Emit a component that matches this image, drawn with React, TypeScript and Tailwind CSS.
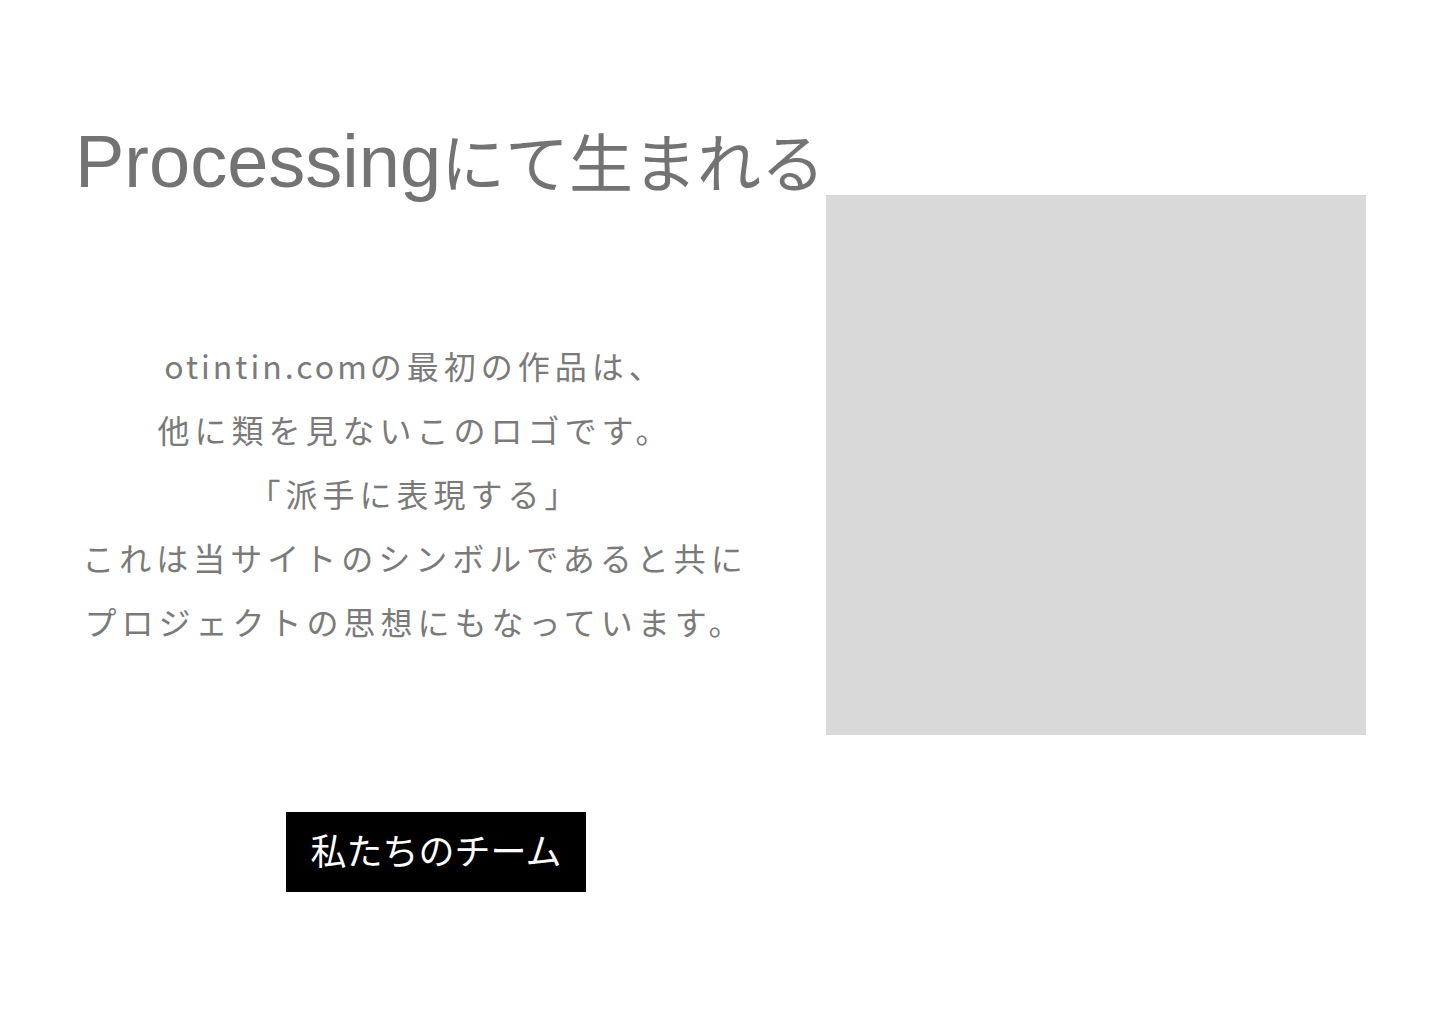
const jp = "font-['Noto_Sans_CJK_JP',sans-serif]";

function Heading() {
  return (
    <h1 className="mt-[123px] h-[76px] whitespace-nowrap text-[74px] leading-[72px] text-[#737373] font-['Liberation_Sans','Noto_Sans_CJK_JP',sans-serif]">
      Processing
      <span className="font-['Noto_Sans_CJK_JP',sans-serif] text-[64px] tracking-[0px]">
        にて生まれる
      </span>
    </h1>
  );
}

const lines = [
  "他に類を見ないこのロゴです。",
  "「派手に表現する」",
  "これは当サイトのシンボルであると共に",
  "プロジェクトの思想にもなっています。",
];

export default function App() {
  return (
    <div className="min-h-[1024px] w-[1440px] bg-white pl-[75px]">
      <div className="flex">
        <div className="flex w-[751px] flex-col">
          <Heading />
          <div
            className={`mt-[134px] w-[680px] text-center text-[32px] font-normal leading-[64px] tracking-[5px] text-[#7a7a7a] ${jp}`}
          >
            <p className="whitespace-nowrap">
              <span className="tracking-[3px]">otintin.com</span>
              の最初の作品は、
            </p>
            {lines.map((l) => (
              <p key={l} className="whitespace-nowrap">
                {l}
              </p>
            ))}
          </div>
          <button
            className={`ml-[211px] mt-[159px] flex h-[80px] w-[300px] items-center justify-center bg-black pb-[6px] text-[36px] text-white ${jp}`}
          >
            私たちのチーム
          </button>
        </div>
        <div className="mt-[195px] h-[540px] w-[540px] bg-[#d9d9d9]" />
      </div>
    </div>
  );
}
